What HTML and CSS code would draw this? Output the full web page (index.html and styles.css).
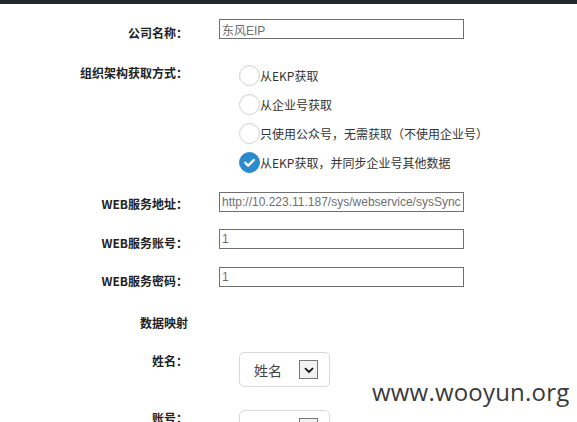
FILE: index.html
```html
<!DOCTYPE html>
<html lang="zh-CN">
<head>
<meta charset="utf-8">
<title>组织架构同步配置</title>
<link rel="stylesheet" href="styles.css">
</head>
<body>
<div class="topbar"></div>
<div class="form">
  <div class="row r-name">
    <div class="label">公司名称：</div>
    <div class="field"><input class="text" type="text" value="东风EIP"></div>
  </div>
  <div class="row r-mode">
    <div class="label lbl-mode">组织架构获取方式：</div>
    <div class="field radios">
      <div class="radio"><span class="circle"></span><span>从EKP获取</span></div>
      <div class="radio"><span class="circle"></span><span>从企业号获取</span></div>
      <div class="radio"><span class="circle"></span><span>只使用公众号，无需获取（不使用企业号）</span></div>
      <div class="radio"><span class="circle checked"><svg viewBox="0 0 21 21" width="21" height="21"><path d="M6.3 10.8 L9.2 13.6 L14.8 8" fill="none" stroke="#fff" stroke-width="2.4" stroke-linecap="round" stroke-linejoin="round"/></svg></span><span>从EKP获取，并同步企业号其他数据</span></div>
    </div>
  </div>
  <div class="row r-url">
    <div class="label lbl-url">WEB服务地址：</div>
    <div class="field"><input class="text" type="text" value="http://10.223.11.187/sys/webservice/sysSynchroGetOrgWebService"></div>
  </div>
  <div class="row r-acc">
    <div class="label">WEB服务账号：</div>
    <div class="field"><input class="text" type="text" value="1"></div>
  </div>
  <div class="row r-pwd">
    <div class="label">WEB服务密码：</div>
    <div class="field"><input class="text" type="text" value="1"></div>
  </div>
  <div class="row r-map">
    <div class="label plain">数据映射</div>
    <div class="field"></div>
  </div>
  <div class="row r-sel1">
    <div class="label lbl-sel1">姓名：</div>
    <div class="field"><div class="select"><span class="sel-text">姓名</span><span class="arrow"><svg viewBox="0 0 18 18" width="16" height="16"><path d="M4.5 7 L9 11.2 L13.5 7" fill="none" stroke="#111" stroke-width="2"/></svg></span></div></div>
  </div>
  <div class="row r-sel2">
    <div class="label lbl-sel2">账号：</div>
    <div class="field"><div class="select"><span class="sel-text">登录名</span><span class="arrow"><svg viewBox="0 0 18 18" width="16" height="16"><path d="M4.5 7 L9 11.2 L13.5 7" fill="none" stroke="#111" stroke-width="2"/></svg></span></div></div>
  </div>
</div>
<div class="watermark">www.wooyun.org</div>
</body>
</html>
```
FILE: styles.css
```css
html, body {
  margin: 0;
  padding: 0;
  background: #fff;
  overflow: hidden;
}
body {
  width: 577px;
  height: 422px;
  position: relative;
  font-family: "Noto Sans CJK SC", "Microsoft YaHei", sans-serif;
  font-size: 12px;
  color: #333;
}
.topbar {
  height: 4px;
  background: #23272e;
}
.form {
  padding-top: 15px;
}
.row {
  display: grid;
  grid-template-columns: 188px 245px;
  column-gap: 31px;
}
.label {
  box-sizing: border-box;
  height: 20px;
  text-align: right;
  font-weight: bold;
  line-height: 16px;
  padding-top: 6px;
  color: #222;
  white-space: nowrap;
}
.label.plain {
  height: 16px;
  padding-top: 0;
}
.field {
  position: relative;
}
.text {
  box-sizing: border-box;
  display: block;
  width: 245px;
  height: 20px;
  margin: 0;
  padding: 0 2px;
  border: 1px solid #707070;
  font-family: "Liberation Sans", "Noto Sans CJK SC", sans-serif;
  font-size: 12px;
  color: #6f6f6f;
  background: #fff;
  outline: none;
}
.r-mode { margin-top: 22px; }
.lbl-mode { padding-top: 4px; }
.radios {
  padding-left: 20px;
  width: 300px;
}
.radio {
  height: 29px;
  display: flex;
  align-items: center;
  white-space: nowrap;
  color: #333;
}
.circle {
  box-sizing: border-box;
  width: 21px;
  height: 21px;
  border-radius: 50%;
  border: 1px solid #d4d2cc;
  background: #fff;
  box-shadow: inset 0 1px 2px rgba(0,0,0,0.05);
  flex: none;
}
.circle.checked {
  background: #2a8ccf;
  border-color: #2a8ccf;
  position: relative;
}
.circle.checked svg {
  position: absolute;
  left: -1px;
  top: -1px;
}
.r-url { margin-top: 15px; }
.lbl-url { padding-top: 4px; }
.r-acc { margin-top: 17px; }
.r-pwd { margin-top: 18px; }
.r-map { margin-top: 28px; }
.r-sel1 { margin-top: 21px; }
.lbl-sel1 { padding-top: 1px; }
.r-sel2 { margin-top: 23px; }
.lbl-sel2 { padding-top: 0; }
.select {
  box-sizing: border-box;
  margin-left: 20px;
  width: 91px;
  height: 35px;
  border: 1px solid #d8d8d8;
  border-radius: 5px;
  display: flex;
  align-items: center;
  padding-left: 14px;
  background: #fff;
}
.sel-text {
  font-size: 14px;
  color: #444;
  width: 45px;
  white-space: nowrap;
}
.arrow {
  box-sizing: border-box;
  width: 19px;
  height: 19px;
  border: 1px solid #777;
  background: #f2f2f2;
  display: flex;
  align-items: center;
  justify-content: center;
}
.watermark {
  position: absolute;
  left: 372px;
  top: 375px;
  font-family: "Open Sans", "DejaVu Sans", sans-serif;
  font-size: 24px;
  letter-spacing: 0.2px;
  color: #3a3a3a;
}
```
